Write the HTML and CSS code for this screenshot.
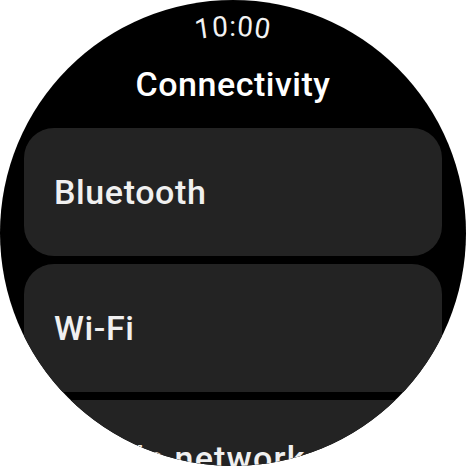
FILE: index.html
```html
<!DOCTYPE html>
<html lang="en">
<head>
<meta charset="utf-8">
<title>Connectivity</title>
<link rel="stylesheet" href="styles.css">
</head>
<body>
<div class="watch">
  <div class="time">
    <svg class="time-svg" viewBox="0 0 466 48" width="466" height="48">
      <defs>
        <path id="timeArc" d="M 36 233 A 197 197 0 0 1 430 233"/>
      </defs>
      <text class="time-text"><textPath href="#timeArc" startOffset="50%" text-anchor="middle">10:00</textPath></text>
    </svg>
  </div>
  <h1 class="title">Connectivity</h1>
  <div class="list">
    <div class="chip"><span class="chip-label">Bluetooth</span></div>
    <div class="chip"><span class="chip-label">Wi-Fi</span></div>
    <div class="chip chip--raised"><span class="chip-label">Mobile network</span></div>
  </div>
</div>
</body>
</html>
```
FILE: styles.css
```css
html, body {
  margin: 0;
  padding: 0;
  background: #ffffff;
}

body {
  width: 466px;
  height: 466px;
  overflow: hidden;
  font-family: Roboto, "Noto Sans", "Liberation Sans", sans-serif;
}

.watch {
  width: 466px;
  height: 466px;
  border-radius: 50%;
  background: #000000;
  overflow: hidden;
  display: flex;
  flex-direction: column;
}

.time {
  height: 48px;
  flex: none;
}

.time-svg {
  display: block;
  overflow: visible;
}

.time-text {
  fill: #f2f2f2;
  font-family: Roboto, "Noto Sans", sans-serif;
  font-size: 28px;
  font-weight: 400;
  letter-spacing: 0.8px;
}

.title {
  margin: 16px 0 24px;
  height: 40px;
  line-height: 40px;
  font-size: 34px;
  font-weight: 500;
  color: #ffffff;
  text-align: center;
  letter-spacing: 0.5px;
  flex: none;
}

.list {
  display: flex;
  flex-direction: column;
  gap: 8px;
  padding: 0 24px;
}

.chip {
  height: 128px;
  flex: none;
  box-sizing: border-box;
  background: #232323;
  border-radius: 30px;
  padding: 0 30px;
  display: flex;
  align-items: center;
}

.chip--raised {
  padding-bottom: 12px;
}

.chip-label {
  font-size: 34px;
  line-height: 40px;
  font-weight: 500;
  color: #f0f0f0;
  letter-spacing: 0.6px;
  white-space: nowrap;
}

.chip--raised .chip-label {
  letter-spacing: 1.2px;
}
```
